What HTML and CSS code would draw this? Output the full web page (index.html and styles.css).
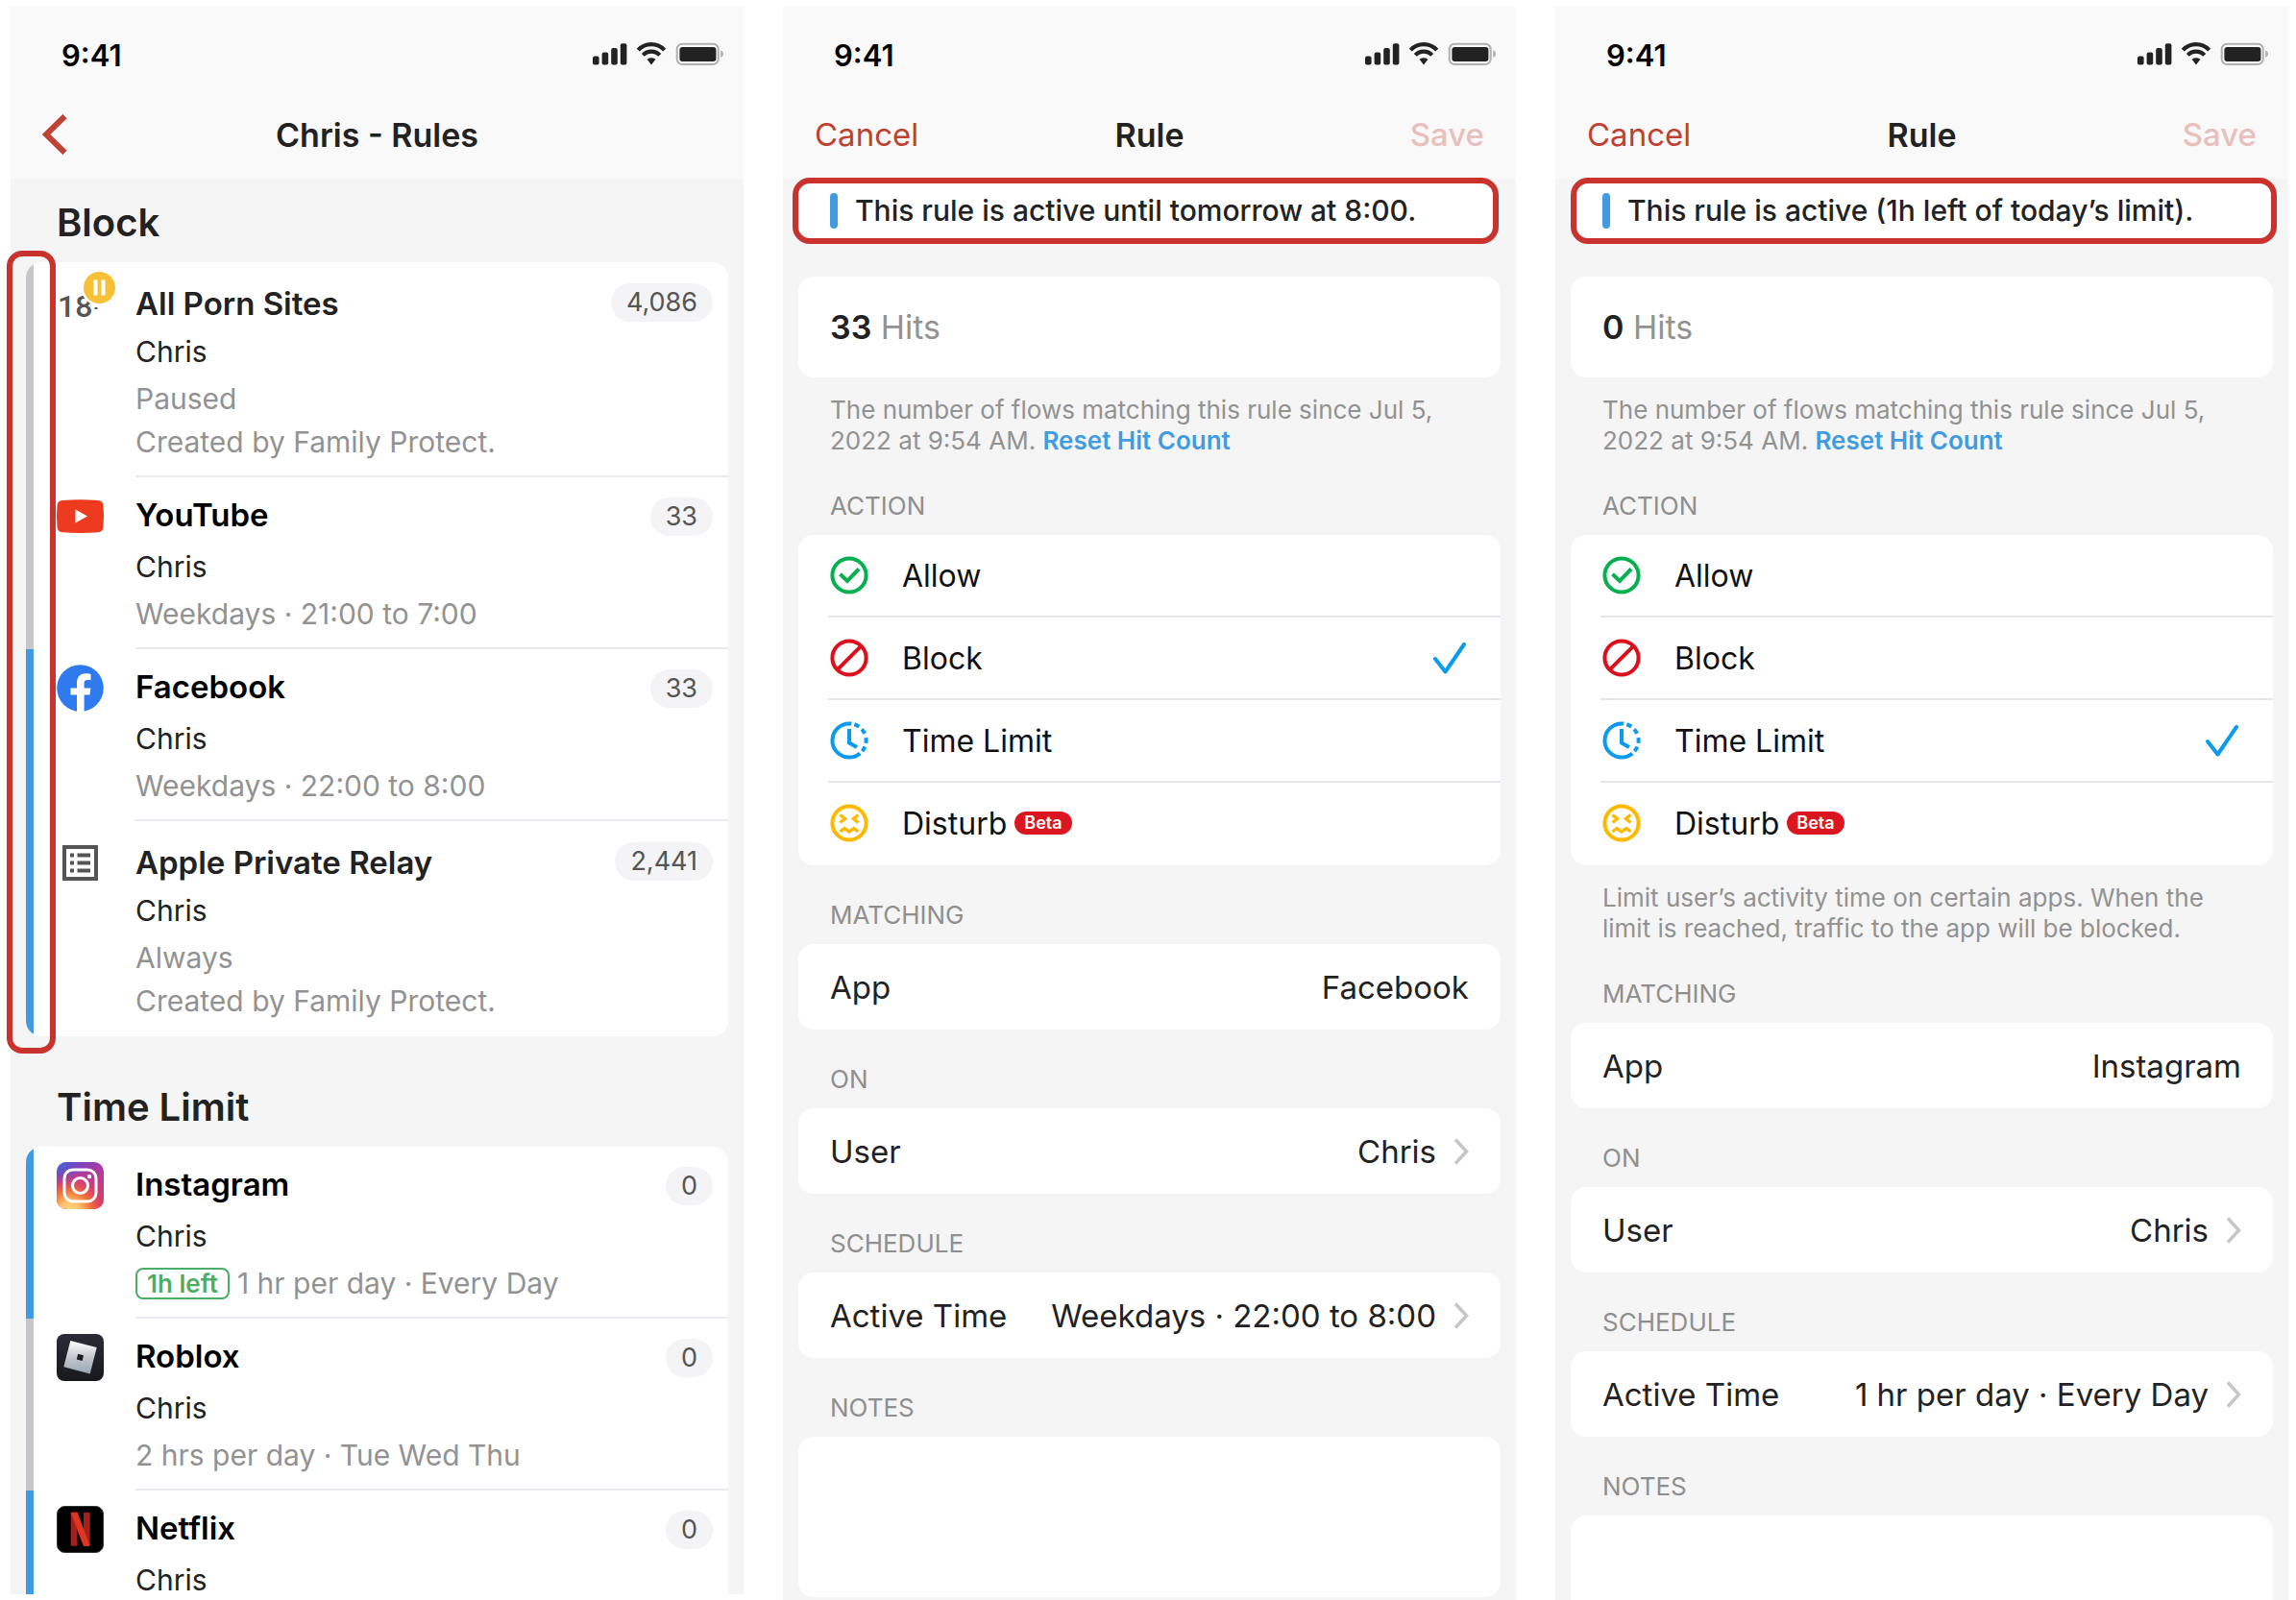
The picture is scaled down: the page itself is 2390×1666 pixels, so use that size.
FILE: index.html
```html
<!-- index.html -->
<!DOCTYPE html>
<html lang="en">
<head>
    <meta charset="UTF-8">
    <meta name="viewport" content="width=device-width, initial-scale=1.0">
    <title>Family Protect - Rules</title>
    <link rel="stylesheet" href="styles.css">
</head>
<body>
    <!-- Shared icons -->
    <svg class="sprite" aria-hidden="true">
        <defs>
            <linearGradient id="insta-base" x1="0.2" y1="0" x2="0.6" y2="1">
                <stop offset="0" stop-color="#6a45c8"/>
                <stop offset="0.45" stop-color="#b83a9c"/>
                <stop offset="1" stop-color="#d93b5c"/>
            </linearGradient>
            <radialGradient id="insta-warm" cx="0.27" cy="1.08" r="0.95">
                <stop offset="0" stop-color="#fddc85"/>
                <stop offset="0.25" stop-color="#fbc169"/>
                <stop offset="0.5" stop-color="#f0703a"/>
                <stop offset="0.75" stop-color="#dc3f68" stop-opacity="0.7"/>
                <stop offset="1" stop-color="#b83a9c" stop-opacity="0"/>
            </radialGradient>
            <radialGradient id="insta-cool" cx="0.05" cy="0" r="0.5">
                <stop offset="0" stop-color="#3b6fdc"/>
                <stop offset="1" stop-color="#6a45c8" stop-opacity="0"/>
            </radialGradient>
            <linearGradient id="roblox-bg" x1="0" y1="0" x2="0" y2="1">
                <stop offset="0" stop-color="#2a2b35"/>
                <stop offset="1" stop-color="#17191c"/>
            </linearGradient>
            <linearGradient id="roblox-tile" x1="0" y1="0" x2="0" y2="1">
                <stop offset="0" stop-color="#ffffff"/>
                <stop offset="0.5" stop-color="#c3c7cc"/>
                <stop offset="1" stop-color="#9aa7b5"/>
            </linearGradient>
        </defs>
        <symbol id="status" viewBox="0 0 136 24">
            <g fill="#222">
                <rect x="0" y="14.5" width="6.6" height="9" rx="2"/>
                <rect x="9.6" y="10.5" width="6.6" height="13" rx="2"/>
                <rect x="19.2" y="6" width="6.6" height="17.5" rx="2"/>
                <rect x="28.8" y="1.2" width="6.6" height="22.3" rx="2"/>
                <path d="M56.6 17.7Q61 14.8 65.4 17.7L61 23.4Z"/>
                <rect x="90.4" y="5" width="38" height="15" rx="3"/>
            </g>
            <path d="M47.3 9.2A18.6 18.6 0 0 1 74.7 9.2M52.3 14.4A12 12 0 0 1 69.7 14.4" transform="translate(0 -1)" fill="none" stroke="#222" stroke-width="4.2"/>
            <rect x="87.7" y="1.7" width="43" height="21.3" rx="5.5" fill="none" stroke="#b0b0b0" stroke-width="2"/>
            <path d="M133.2 8.6Q136 9.4 136 12.2T133.2 15.8Z" fill="#b0b0b0"/>
        </symbol>
        <symbol id="chevron" viewBox="0 0 16 28">
            <path d="M2 1.5L13.5 14L2 26.5" fill="none" stroke="#c6c6ca" stroke-width="3.5"/>
        </symbol>
        <symbol id="check" viewBox="0 0 34 33">
            <path d="M2 17L12.5 30.5L32 2" fill="none" stroke="#0a9bee" stroke-width="4" stroke-linecap="round" stroke-linejoin="round"/>
        </symbol>
        <symbol id="allow" viewBox="0 0 40 40">
            <g fill="none" stroke="#06b050" stroke-width="4">
                <circle cx="20" cy="20" r="17.6"/>
                <path d="M10.5 18.8L18 26L30 13.5"/>
            </g>
        </symbol>
        <symbol id="block" viewBox="0 0 40 40">
            <g fill="none" stroke="#dc0f1c" stroke-width="4">
                <circle cx="20" cy="20" r="17.6"/>
                <path d="M7.6 32.4L32.4 7.6"/>
            </g>
        </symbol>
        <symbol id="timer" viewBox="0 0 40 40">
            <g fill="none" stroke="#0a9bee" stroke-width="4">
                <circle cx="20" cy="20" r="17.6" pathLength="360" transform="rotate(-90 20 20)" stroke-dasharray="8 10 18 12 18 14 20 12 18 10 220 0"/>
                <path d="M20 8V22.5L28 27"/>
            </g>
        </symbol>
        <symbol id="disturb" viewBox="0 0 40 40">
            <g fill="none" stroke="#fdb900" stroke-width="4">
                <circle cx="20" cy="20" r="17.6"/>
                <path d="M10.5 11.5L15.5 15.5L10.5 19.5M29.5 11.5L24.5 15.5L29.5 19.5" stroke-width="3.4"/>
                <path d="M10.5 29L15 25.5L20 29L25 25.5L29.5 29" stroke-width="3.4"/>
            </g>
        </symbol>
    </svg>

    <main class="screens">
        <!-- Rules list -->
        <section class="phone phone-list">
            <header class="top">
                <div class="status">
                    <span>9:41</span>
                    <svg class="status-icons" aria-hidden="true"><use href="#status"/></svg>
                </div>
                <div class="nav">
                    <button class="back" type="button" aria-label="Back">
                        <svg viewBox="0 0 26 42" aria-hidden="true"><path d="M23.5 2L4 21L23.5 40" fill="none" stroke="#bf4232" stroke-width="6"/></svg>
                    </button>
                    <h1>Chris - Rules</h1>
                </div>
            </header>

            <h2>Block</h2>
            <div class="group">
                <ul class="card">
                    <li class="rule">
                        <svg class="icon" viewBox="0 0 49 49" aria-hidden="true">
                            <text x="1" y="41" class="adult">18</text>
                            <circle cx="44.5" cy="10.5" r="19" fill="#fff"/>
                            <circle cx="44.5" cy="10.5" r="16.5" fill="#f6c137"/>
                            <path d="M40.5 2.5V18.5M48.5 2.5V18.5" stroke="#fff" stroke-width="4"/>
                            <path d="M39.5 32H42.5" stroke="#555" stroke-width="2"/>
                        </svg>
                        <div class="rule-body">
                            <div class="rule-text">
                                <h3>All Porn Sites</h3>
                                <p class="who">Chris</p>
                                <p class="when">Paused</p>
                                <p class="note">Created by Family Protect.</p>
                            </div>
                            <span class="count">4,086</span>
                        </div>
                    </li>
                    <li class="rule app">
                        <svg class="icon" viewBox="0 0 49 49" aria-hidden="true">
                            <path d="M6 8Q24.500 6.500 43 8Q48 8.500 48.500 13Q49.500 24.500 48.500 36Q48 41 43 41.300Q24.500 42.700 6 41.300Q1 41 0.500 36Q-0.500 24.500 0.500 13Q1 8.500 6 8Z" fill="#ee3a1e"/>
                            <path d="M19.500 17.500L32 24.500L19.500 31.500Z" fill="#fff"/>
                        </svg>
                        <div class="rule-body">
                            <div class="rule-text">
                                <h3>YouTube</h3>
                                <p class="who">Chris</p>
                                <p class="when">Weekdays · 21:00 to 7:00</p>
                            </div>
                            <span class="count">33</span>
                        </div>
                    </li>
                    <li class="rule app active">
                        <svg class="icon" viewBox="0 0 49 49" aria-hidden="true">
                            <circle cx="24.500" cy="24.500" r="24.300" fill="#2f7aee"/>
                            <path d="M21 49V31.500H14.500V24.500H21V19C21 12.500 24.800 9.300 30.500 9.300C32.500 9.300 34.800 9.700 35.500 9.900V16H32.200C29.300 16 28.600 17.600 28.600 19.600V24.500H35.500L34.400 31.500H28.600V49Z" fill="#fff"/>
                        </svg>
                        <div class="rule-body">
                            <div class="rule-text">
                                <h3>Facebook</h3>
                                <p class="who">Chris</p>
                                <p class="when">Weekdays · 22:00 to 8:00</p>
                            </div>
                            <span class="count">33</span>
                        </div>
                    </li>
                    <li class="rule active">
                        <svg class="icon" viewBox="0 0 49 49" aria-hidden="true">
                            <rect x="8" y="11" width="33" height="33" fill="none" stroke="#555" stroke-width="4"/>
                            <path d="M14 19.500H18M14 27.500H18M14 35.500H18M21.500 19.500H35M21.500 27.500H35M21.500 35.500H35" stroke="#555" stroke-width="4"/>
                        </svg>
                        <div class="rule-body">
                            <div class="rule-text">
                                <h3>Apple Private Relay</h3>
                                <p class="who">Chris</p>
                                <p class="when">Always</p>
                                <p class="note">Created by Family Protect.</p>
                            </div>
                            <span class="count">2,441</span>
                        </div>
                    </li>
                </ul>
                <div class="highlight"></div>
            </div>

            <h2 class="next">Time Limit</h2>
            <div class="group">
                <ul class="card">
                    <li class="rule app active">
                        <svg class="icon" viewBox="0 0 49 49" aria-hidden="true">
                            <rect width="49" height="49" rx="10" fill="url(#insta-base)"/>
                            <rect width="49" height="49" rx="10" fill="url(#insta-warm)"/>
                            <rect width="49" height="49" rx="10" fill="url(#insta-cool)"/>
                            <rect x="8" y="8" width="33" height="33" rx="9" fill="none" stroke="#fff" stroke-width="3"/>
                            <circle cx="24.500" cy="24.500" r="8" fill="none" stroke="#fff" stroke-width="3"/>
                            <circle cx="34" cy="15" r="2.200" fill="#fff"/>
                        </svg>
                        <div class="rule-body">
                            <div class="rule-text">
                                <h3>Instagram</h3>
                                <p class="who">Chris</p>
                                <p class="when"><span class="left">1h left</span>1 hr per day · Every Day</p>
                            </div>
                            <span class="count">0</span>
                        </div>
                    </li>
                    <li class="rule app">
                        <svg class="icon" viewBox="0 0 49 49" aria-hidden="true">
                            <rect width="49" height="49" rx="8" fill="url(#roblox-bg)"/>
                            <path d="M14.300 7L41.700 14L34.700 41.500L7.300 34.300Z" fill="url(#roblox-tile)"/>
                            <path d="M22.200 20.800L28 22.200L26.600 28L20.800 26.600Z" fill="#1c1e22"/>
                        </svg>
                        <div class="rule-body">
                            <div class="rule-text">
                                <h3>Roblox</h3>
                                <p class="who">Chris</p>
                                <p class="when">2 hrs per day · Tue Wed Thu</p>
                            </div>
                            <span class="count">0</span>
                        </div>
                    </li>
                    <li class="rule app active">
                        <svg class="icon" viewBox="0 0 49 49" aria-hidden="true">
                            <rect x="0.500" y="0.500" width="48" height="48" rx="8" fill="#000" stroke="#333"/>
                            <path d="M14.700 6.700H21.500V41.700H14.700ZM28 6.700H34.700V41.700H28Z" fill="#a3211a"/>
                            <path d="M14.700 6.700H21.700L34.700 41.700H27.800Z" fill="#dd3423"/>
                        </svg>
                        <div class="rule-body">
                            <div class="rule-text">
                                <h3>Netflix</h3>
                                <p class="who">Chris</p>
                            </div>
                            <span class="count">0</span>
                        </div>
                    </li>
                </ul>
            </div>
        </section>

        <!-- Block rule -->
        <section class="phone">
            <header class="top">
                <div class="status">
                    <span>9:41</span>
                    <svg class="status-icons" aria-hidden="true"><use href="#status"/></svg>
                </div>
                <div class="nav">
                    <button class="cancel" type="button">Cancel</button>
                    <h1>Rule</h1>
                    <button class="save" type="button" disabled>Save</button>
                </div>
            </header>

            <div class="notice notice-wide"><p>This rule is active until tomorrow at 8:00.</p></div>

            <form class="form">
                <p class="box hits"><strong>33</strong> Hits</p>
                <p class="help">The number of flows matching this rule since Jul 5, 2022 at 9:54 AM. <a class="reset" href="#">Reset Hit Count</a></p>

                <h2 class="label">ACTION</h2>
                <div class="box actions">
                    <label class="action">
                        <svg class="action-icon" aria-hidden="true"><use href="#allow"/></svg>
                        <input type="radio" name="action-block"><span>Allow</span>
                        <svg class="check" aria-hidden="true"><use href="#check"/></svg>
                    </label>
                    <label class="action">
                        <svg class="action-icon" aria-hidden="true"><use href="#block"/></svg>
                        <input type="radio" name="action-block" checked><span>Block</span>
                        <svg class="check" aria-hidden="true"><use href="#check"/></svg>
                    </label>
                    <label class="action">
                        <svg class="action-icon" aria-hidden="true"><use href="#timer"/></svg>
                        <input type="radio" name="action-block"><span>Time Limit</span>
                        <svg class="check" aria-hidden="true"><use href="#check"/></svg>
                    </label>
                    <label class="action">
                        <svg class="action-icon" aria-hidden="true"><use href="#disturb"/></svg>
                        <input type="radio" name="action-block"><span>Disturb</span><em class="beta">Beta</em>
                        <svg class="check" aria-hidden="true"><use href="#check"/></svg>
                    </label>
                </div>

                <h2 class="label">MATCHING</h2>
                <div class="box row"><span>App</span><span class="value">Facebook</span></div>

                <h2 class="label">ON</h2>
                <button class="box row" type="button"><span>User</span><span class="value">Chris</span><svg class="chevron" aria-hidden="true"><use href="#chevron"/></svg></button>

                <h2 class="label">SCHEDULE</h2>
                <button class="box row" type="button"><span>Active Time</span><span class="value">Weekdays · 22:00 to 8:00</span><svg class="chevron" aria-hidden="true"><use href="#chevron"/></svg></button>

                <label class="label" for="notes-block">NOTES</label>
                <textarea class="box notes" id="notes-block"></textarea>
            </form>
        </section>

        <!-- Time limit rule -->
        <section class="phone">
            <header class="top">
                <div class="status">
                    <span>9:41</span>
                    <svg class="status-icons" aria-hidden="true"><use href="#status"/></svg>
                </div>
                <div class="nav">
                    <button class="cancel" type="button">Cancel</button>
                    <h1>Rule</h1>
                    <button class="save" type="button" disabled>Save</button>
                </div>
            </header>

            <div class="notice"><p>This rule is active (1h left of today’s limit).</p></div>

            <form class="form">
                <p class="box hits"><strong>0</strong> Hits</p>
                <p class="help">The number of flows matching this rule since Jul 5, 2022 at 9:54 AM. <a class="reset" href="#">Reset Hit Count</a></p>

                <h2 class="label">ACTION</h2>
                <div class="box actions">
                    <label class="action">
                        <svg class="action-icon" aria-hidden="true"><use href="#allow"/></svg>
                        <input type="radio" name="action-limit"><span>Allow</span>
                        <svg class="check" aria-hidden="true"><use href="#check"/></svg>
                    </label>
                    <label class="action">
                        <svg class="action-icon" aria-hidden="true"><use href="#block"/></svg>
                        <input type="radio" name="action-limit"><span>Block</span>
                        <svg class="check" aria-hidden="true"><use href="#check"/></svg>
                    </label>
                    <label class="action">
                        <svg class="action-icon" aria-hidden="true"><use href="#timer"/></svg>
                        <input type="radio" name="action-limit" checked><span>Time Limit</span>
                        <svg class="check" aria-hidden="true"><use href="#check"/></svg>
                    </label>
                    <label class="action">
                        <svg class="action-icon" aria-hidden="true"><use href="#disturb"/></svg>
                        <input type="radio" name="action-limit"><span>Disturb</span><em class="beta">Beta</em>
                        <svg class="check" aria-hidden="true"><use href="#check"/></svg>
                    </label>
                </div>
                <p class="help">Limit user’s activity time on certain apps. When the limit is reached, traffic to the app will be blocked.</p>

                <h2 class="label">MATCHING</h2>
                <div class="box row"><span>App</span><span class="value">Instagram</span></div>

                <h2 class="label">ON</h2>
                <button class="box row" type="button"><span>User</span><span class="value">Chris</span><svg class="chevron" aria-hidden="true"><use href="#chevron"/></svg></button>

                <h2 class="label">SCHEDULE</h2>
                <button class="box row" type="button"><span>Active Time</span><span class="value">1 hr per day · Every Day</span><svg class="chevron" aria-hidden="true"><use href="#chevron"/></svg></button>

                <label class="label" for="notes-limit">NOTES</label>
                <textarea class="box notes" id="notes-limit"></textarea>
            </form>
        </section>
    </main>
</body>
</html>
```
FILE: styles.css
```css
/* Basic reset */
* {
    box-sizing: border-box;
    margin: 0;
    padding: 0;
}

body {
    background-color: #ffffff;
    font-family: Inter, "Liberation Sans", sans-serif;
    font-size: 33px;
    color: #222;
}

button,
textarea {
    font: inherit;
    color: inherit;
    border: none;
    background: none;
}

button {
    cursor: pointer;
}

ul {
    list-style: none;
}

.sprite {
    position: absolute;
    width: 0;
    height: 0;
}

/* Three screens side by side */
.screens {
    display: grid;
    grid-template-columns: repeat(3, 1fr);
    gap: 41px;
    height: 100vh;
    padding: 7px 8px 0 11px;
    overflow: hidden;
}

.phone {
    min-width: 0;
    min-height: 0;
    background-color: #f5f5f5;
    overflow-y: clip;
}

.phone-list {
    margin-bottom: 6px;
}

/* Status bar and navigation */
.top {
    padding-bottom: 13px;
    background-color: #f9f9f9;
}

.status {
    display: flex;
    justify-content: space-between;
    align-items: center;
    height: 100px;
    padding: 0 21px 0 53px;
    font-size: 31px;
    font-weight: 600;
    color: #000;
}

.status-icons {
    width: 136px;
    height: 24px;
    margin-bottom: 3px;
}

.nav {
    display: grid;
    grid-template-columns: 1fr auto 1fr;
    align-items: center;
    height: 66px;
    padding: 0 33px;
}

.nav h1 {
    grid-column: 2;
    font-size: 34px;
    font-weight: 600;
}

.back {
    justify-self: start;
    width: 26px;
    height: 42px;
}

.back svg {
    display: block;
}

.cancel {
    justify-self: start;
    color: #c04030;
}

.save {
    justify-self: end;
    font-weight: 500;
    color: #e8c0bc;
}

/* Rules list */
.phone-list h2 {
    padding: 16px 48px 11px;
    font-size: 40px;
    font-weight: 600;
    line-height: 60px;
}

.phone-list .next {
    padding-top: 44px;
}

.group {
    position: relative;
    margin: 0 16px;
}

.card {
    border-radius: 16px;
    background-color: #ffffff;
    overflow: hidden;
}

.rule {
    display: flex;
    gap: 33px;
    padding-left: 24px;
    border-left: 8px solid #c6c6cb;
}

.rule.active {
    border-left-color: #429be0;
}

.icon {
    flex: none;
    width: 49px;
    height: 49px;
    margin-top: 16px;
    overflow: visible;
}

.adult {
    font-family: Roboto, sans-serif;
    font-size: 32px;
    font-weight: 500;
    fill: #555;
}

.rule-body {
    display: flex;
    flex: 1;
    justify-content: space-between;
    align-items: flex-start;
    padding: 18px 16px 11px 0;
    border-bottom: 2px solid #e9e9f0;
}

.rule:last-child .rule-body {
    border-bottom-color: transparent;
}

.rule h3 {
    font-size: 33px;
    font-weight: 600;
    line-height: 50px;
}

.app .rule-body {
    padding-top: 14px;
}

.app h3 {
    margin-bottom: 4px;
    color: #000;
}

.who {
    font-size: 30px;
    line-height: 50px;
}

.when,
.note {
    font-size: 30px;
    line-height: 48px;
    color: #929292;
}

.note {
    padding-bottom: 2px;
    line-height: 43px;
}

.when {
    display: flex;
    align-items: center;
    gap: 8px;
}

.left {
    padding: 0 10px;
    border: 2px solid #4bae68;
    border-radius: 8px;
    font-size: 26px;
    font-weight: 600;
    line-height: 29px;
    color: #4bae68;
}

.count {
    margin-top: 4px;
    padding: 0 16px;
    border-radius: 20px;
    background-color: #f4f4f6;
    font-size: 27px;
    line-height: 40px;
    color: #555;
}

.app .count {
    margin-top: 7px;
}

/* Red marker round the activity bar */
.highlight {
    position: absolute;
    top: -12px;
    bottom: -18px;
    left: -20px;
    width: 51px;
    border: 6px solid #c9322d;
    border-radius: 16px;
}

/* Active rule notice */
.notice {
    margin: -1px 12px 34px 16px;
    padding: 10px 27px;
    border: 6px solid #c9322d;
    border-radius: 18px;
    background-color: #ffffff;
}

.notice-wide {
    margin: -1px 18px 34px 10px;
    padding: 10px 33px;
}

.notice p {
    display: flex;
    align-items: center;
    gap: 18px;
    font-size: 30px;
    font-weight: 500;
    line-height: 37px;
    white-space: nowrap;
}

.notice p::before {
    content: "";
    width: 8px;
    height: 37px;
    border-radius: 4px;
    background-color: #429be0;
}

/* Rule form */
.form {
    padding: 0 16px;
}

.box {
    display: block;
    width: 100%;
    border-radius: 16px;
    background-color: #ffffff;
}

.hits {
    padding: 0 33px;
    font-size: 34px;
    line-height: 105px;
    color: #929292;
}

.hits strong {
    font-weight: 600;
    color: #222;
}

.help {
    padding: 18px 33px 0;
    font-size: 26px;
    line-height: 32px;
    color: #929292;
}

.reset {
    font-weight: 600;
    color: #429be0;
    text-decoration: none;
}

.label {
    display: block;
    padding: 36px 33px 14px;
    font-size: 26px;
    font-weight: 400;
    line-height: 32px;
    color: #8f8f8f;
}

.action {
    display: flex;
    align-items: center;
    height: 86px;
    margin-left: 31px;
    padding-right: 36px;
    border-bottom: 2px solid #e4e7f0;
    font-size: 32px;
    color: #111;
}

.action:last-child {
    border-bottom-color: transparent;
}

.action-icon {
    width: 40px;
    height: 40px;
    margin: 0 35px 0 2px;
}

.action input {
    appearance: none;
    width: 0;
    height: 0;
}

.check {
    width: 34px;
    height: 33px;
    margin-left: auto;
    visibility: hidden;
}

.action input:checked ~ .check {
    visibility: visible;
}

.beta {
    margin-left: 8px;
    padding: 0 10px;
    border-radius: 12px;
    background-color: #dc1620;
    font-size: 18px;
    font-style: normal;
    font-weight: 600;
    line-height: 24px;
    color: #ffffff;
}

.row {
    display: flex;
    align-items: center;
    height: 89px;
    padding: 0 33px;
    text-align: left;
}

.value {
    margin-left: auto;
    white-space: nowrap;
}

.chevron {
    width: 16px;
    height: 28px;
    margin-left: 18px;
}

.notes {
    height: 167px;
    padding: 24px 33px;
    resize: none;
}
```
